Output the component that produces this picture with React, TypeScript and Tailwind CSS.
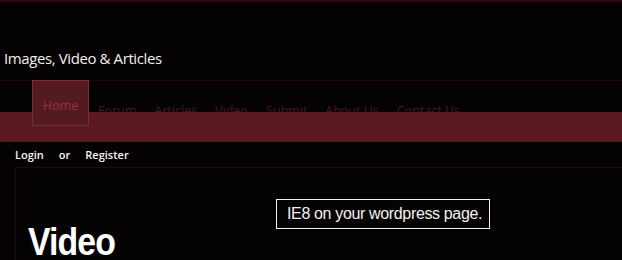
import React from "react";

const navItems = ["Forum", "Articles", "Video", "Submit", "About Us", "Contact Us"];

const App: React.FC = () => {
  return (
    <div className="w-[622px] h-[260px] overflow-hidden bg-[#050203] border-t-2 border-[#2c0a0f] font-['Open_Sans',sans-serif]">
      {/* header */}
      <div className="h-[78px] pl-[4px] pt-[47px]">
        <h1 className="text-[15px] leading-[18px] text-[#f2eeee] tracking-[-0.4px]">
          Images, Video &amp; Articles
        </h1>
      </div>

      {/* nav */}
      <div className="relative h-[32px] border-t border-[#1f080b] flex items-start pl-[32px]">
        <div className="relative z-20 -mt-px h-[46px] w-[57px] border border-[#7c2a34] bg-[#531a22] text-center pt-[11px]">
          <span className="text-[12.5px] leading-[14px] text-[#98303d]">Home</span>
        </div>
        <ul className="flex gap-[18px] pl-[9px] pt-[23px]">
          {navItems.map((item) => (
            <li key={item} className="text-[12.5px] leading-[14px] text-[#4a161c]">
              {item}
            </li>
          ))}
        </ul>
      </div>
      <div className="relative z-10 h-[30px] bg-[#5a1921] border-t border-[#611c25]" />

      {/* login */}
      <div className="h-[25px] pl-[15px] pt-[6px] flex gap-[15px] text-[11px] leading-[14px] font-semibold text-[#f4f4f4]">
        <span>Login</span>
        <span>or</span>
        <span>Register</span>
      </div>

      {/* content */}
      <div className="ml-[15px] border-l border-t border-[#1c0b0e] h-[120px] pt-[31px]">
        <div className="ml-[260px] w-[214px] h-[30px] border border-[#f0f0f0] pl-[10px] whitespace-nowrap font-['Liberation_Sans',Arial,sans-serif] text-[16px] leading-[28px] tracking-[-0.35px] text-[#f2f2f2]">
          IE8 on your wordpress page.
        </div>
        <h2 className="-mt-[6px] pl-[12px] font-['Liberation_Sans',Arial,sans-serif] font-bold text-[38px] leading-none tracking-[-1px] text-white">
          <span className="inline-block origin-left scale-x-[0.89]">Video</span>
        </h2>
      </div>
    </div>
  );
};

export default App;
